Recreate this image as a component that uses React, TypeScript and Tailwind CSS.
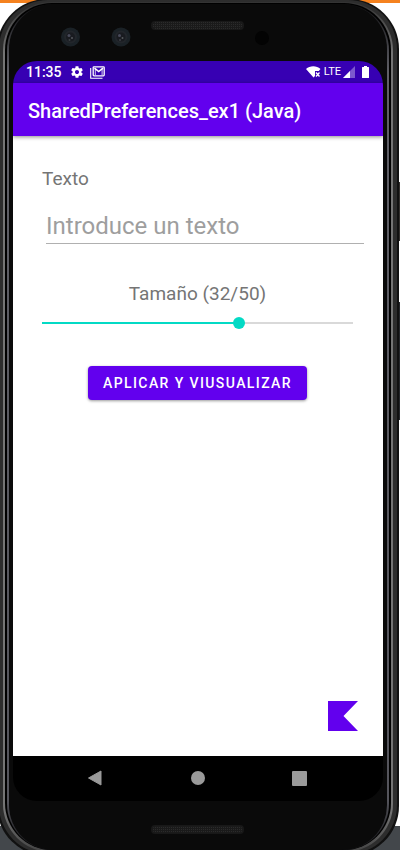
import { useState } from "react";

function Speaker({ y }: { y: number }) {
  return (
    <g>
      <rect x="138" y={y} width="93" height="9" rx="4" fill="#181818" />
      <rect x="140" y={y + 1} width="89" height="7" rx="3" fill="url(#mesh)" />
    </g>
  );
}

function Camera({ x }: { x: number }) {
  return (
    <g>
      <circle cx={x} cy="37" r="9.5" fill="#1a2126" />
      <circle cx={x} cy="37" r="6.5" fill="#22262b" />
      <circle cx={x} cy="37" r="4.5" fill="#191b20" />
      <circle cx={x - 1.5} cy="35.5" r="1.5" fill="#4a4c5c" />
      <circle cx={x + 1.5} cy="38" r="1" fill="#55585c" />
      <circle cx={x - 1} cy="40" r="1" fill="#3c3f45" />
    </g>
  );
}

function TopBezel() {
  return (
    <svg className="block h-[61px] w-full" viewBox="0 0 370 61" aria-hidden="true">
      <defs>
        <pattern id="mesh" width="2" height="2" patternUnits="userSpaceOnUse">
          <rect width="2" height="2" fill="#1a1a1a" />
          <rect width="1" height="1" fill="#2b2b2b" />
        </pattern>
      </defs>
      <Camera x={57.5} />
      <Camera x={108} />
      <Speaker y={21} />
      <circle cx="249" cy="38" r="7" fill="#030303" />
    </svg>
  );
}

function BottomBezel() {
  return (
    <svg className="block h-[55px] w-full" viewBox="0 0 370 55" aria-hidden="true">
      <Speaker y={24} />
    </svg>
  );
}

function StatusBar() {
  return (
    <div className="flex h-[22px] items-center bg-[#3700b3] pr-[14px] pl-[13px] text-white">
      <span className="text-[14px] leading-[22px] font-medium">11:35</span>
      <svg className="ml-[8px] size-[14px]" viewBox="0 0 24 24" fill="currentColor" aria-hidden="true">
        <path d="M19.43 12.98c.04-.32.07-.64.07-.98s-.03-.66-.07-.98l2.11-1.65c.19-.15.24-.42.12-.64l-2-3.46c-.12-.22-.39-.3-.61-.22l-2.49 1c-.52-.4-1.08-.73-1.69-.98l-.38-2.65C14.46 2.18 14.25 2 14 2h-4c-.25 0-.46.18-.49.42l-.38 2.65c-.61.25-1.17.59-1.69.98l-2.49-1c-.23-.09-.49 0-.61.22l-2 3.46c-.13.22-.07.49.12.64l2.11 1.65c-.04.32-.07.65-.07.98s.03.66.07.98l-2.11 1.65c-.19.15-.24.42-.12.64l2 3.46c.12.22.39.3.61.22l2.49-1c.52.4 1.08.73 1.69.98l.38 2.65c.03.24.24.42.49.42h4c.25 0 .46-.18.49-.42l.38-2.65c.61-.25 1.17-.59 1.69-.98l2.49 1c.23.09.49 0 .61-.22l2-3.46c.12-.22.07-.49-.12-.64l-2.11-1.65zM12 15.5c-1.93 0-3.5-1.57-3.5-3.5s1.57-3.5 3.5-3.5 3.5 1.57 3.5 3.5-1.57 3.5-3.5 3.5z" />
      </svg>
      <svg className="ml-[6px] h-[13px] w-[15px]" viewBox="0 0 15 13" fill="none" stroke="currentColor" aria-hidden="true">
        <path d="M.7 2v10.300H12.500" strokeWidth="1.100" />
        <rect x="3.200" y=".8" width="11" height="9" rx=".8" strokeWidth="1.300" />
        <path d="M4.500 2.200L8.700 5.600 13 2.200" strokeWidth="1.600" />
        <path d="M5.300 9V3M12.100 9V3" strokeWidth=".8" />
      </svg>
      <svg className="ml-auto h-[12px] w-[15px]" viewBox="0 0 15 12" fill="currentColor" aria-hidden="true">
        <path d="M0 3C4-.6 10.500-.6 14.500 3L12.800 5H9v5L7.500 11.500z" />
        <path d="M10 6.500l3.500 4M13.500 6.500l-3.500 4" stroke="currentColor" strokeWidth="1.300" />
      </svg>
      <span className="ml-[3px] text-[11px] leading-[22px]">LTE</span>
      <svg className="ml-[2px] size-[12px]" viewBox="0 0 12 12" aria-hidden="true">
        <path d="M0 12L12 0v12z" fill="#fff" fillOpacity=".35" />
        <path d="M0 12L7 5v7z" fill="#fff" />
      </svg>
      <svg className="ml-[7px] h-[12px] w-[7px]" viewBox="0 0 7 12" fill="currentColor" aria-hidden="true">
        <path d="M2 0h3v1h1.500q.5 0 .5.600v9.800q0 .6-.6.600H.6q-.6 0-.6-.6V1.600Q0 1 .5 1H2z" />
      </svg>
    </div>
  );
}

function Content() {
  const [text, setText] = useState("");
  const [size, setSize] = useState(32);
  const filled = `calc(6px + (100% - 12px) * ${size / 50})`;
  return (
    <main className="flex flex-1 flex-col bg-white pt-[31px] pr-[19px] pb-[25px] pl-[29px]">
      <label htmlFor="texto" className="text-[19px] leading-6 text-[#757575]">
        Texto
      </label>
      <input
        id="texto"
        type="text"
        value={text}
        onChange={(e) => setText(e.target.value)}
        placeholder="Introduce un texto"
        className="mt-[18px] ml-[4px] h-[35px] border-b border-[#b0b0b0] bg-transparent text-[24px] text-[#212121] outline-none placeholder:text-[#9e9e9e]"
      />
      <div className="mt-[38px] mr-[11px] flex flex-col items-center">
        <label htmlFor="tamano" className="text-[19px] leading-6 text-[#757575]">
          Tamaño ({size}/50)
        </label>
        <input
          id="tamano"
          type="range"
          min={0}
          max={50}
          value={size}
          onChange={(e) => setSize(Number(e.target.value))}
          style={{ backgroundImage: `linear-gradient(to right, #03dac5 ${filled}, #d9d9d9 ${filled})` }}
          className="mt-[11px] h-[12px] w-full appearance-none bg-[length:100%_2px] bg-center bg-no-repeat [&::-webkit-slider-thumb]:size-[12px] [&::-webkit-slider-thumb]:appearance-none [&::-webkit-slider-thumb]:rounded-full [&::-webkit-slider-thumb]:bg-[#03dac5]"
        />
        <button
          type="button"
          className="mt-[37px] h-[34px] rounded-[4px] bg-[#6200ee] px-[15px] text-[14px] font-medium tracking-widest text-white uppercase shadow-[0_1px_3px_rgba(0,0,0,0.4)]"
        >
          Aplicar y viusualizar
        </button>
      </div>
      <svg className="mt-auto mr-[6px] size-[30px] self-end" viewBox="0 0 30 30" aria-hidden="true">
        <path d="M0 0H30L15.500 15L30 30H0z" fill="#6200ee" />
      </svg>
    </main>
  );
}

function NavBar() {
  return (
    <nav className="flex h-[45px] items-center justify-between bg-black pr-[76px] pb-px pl-[74px]">
      <button type="button" aria-label="Atrás">
        <svg className="block size-[16px]" viewBox="0 0 16 16">
          <path d="M14 1v14L1.500 8z" fill="#9a9a9a" stroke="#9a9a9a" strokeLinejoin="round" />
        </svg>
      </button>
      <button type="button" aria-label="Inicio" className="size-[14px] rounded-full bg-[#9a9a9a]" />
      <button type="button" aria-label="Recientes" className="size-[15px] rounded-[1px] bg-[#9a9a9a]" />
    </nav>
  );
}

export default function App() {
  return (
    <div className="relative flex h-screen min-h-[850px] flex-col overflow-hidden bg-white font-[Roboto,sans-serif]">
      {/* desktop behind the device */}
      <div className="absolute inset-0 flex flex-col" aria-hidden="true">
        <div className="h-[3px] bg-[#f5821f]" />
        <div className="mt-[179px] h-[59px] w-[10px] self-end bg-[#33302e]" />
        <div className="mt-[61px] h-[118px] w-[10px] self-end bg-[#25272b]" />
        <div className="mt-auto h-[24px] bg-[#43474b]" />
      </div>
      {/* metallic frame, from the outer edge inwards */}
      <div className="relative -mt-px mr-px -mb-[6px] -ml-[3px] flex flex-1 rounded-[50px] bg-[#111111] px-[2px] pt-px pb-[2px]">
        <div className="flex flex-1 rounded-[49px] bg-[#2d2d2d] px-[4px] py-[2px]">
          <div className="flex flex-1 rounded-[48px] bg-[linear-gradient(#333333,#757575_6%,#757575_95%,#444444)] px-[2px] pt-px pb-[2px]">
            <div className="flex flex-1 rounded-[47px] bg-black px-[2px] pt-px">
              <div className="flex flex-1 rounded-[46px] bg-[linear-gradient(#101012,#606067_8%,#55555c_94%,#101012)] px-[2px]">
                <div className="flex flex-1 flex-col rounded-[45px] bg-[#0a0a0a] px-[4px]">
                  <div className="-mt-[4px]">
                    <TopBezel />
                  </div>
                  <div className="flex flex-1 flex-col overflow-hidden rounded-[24px]">
                    <StatusBar />
                    <header className="relative flex h-[53px] items-center bg-[#6200ee] pt-[2px] pl-[15px] shadow-[0_1px_4px_rgba(0,0,0,0.45)]">
                      <h1 className="text-[20px] leading-6 font-medium text-white">SharedPreferences_ex1 (Java)</h1>
                    </header>
                    <Content />
                    <NavBar />
                  </div>
                  <div className="-mb-[6px]">
                    <BottomBezel />
                  </div>
                </div>
              </div>
            </div>
          </div>
        </div>
      </div>
    </div>
  );
}
